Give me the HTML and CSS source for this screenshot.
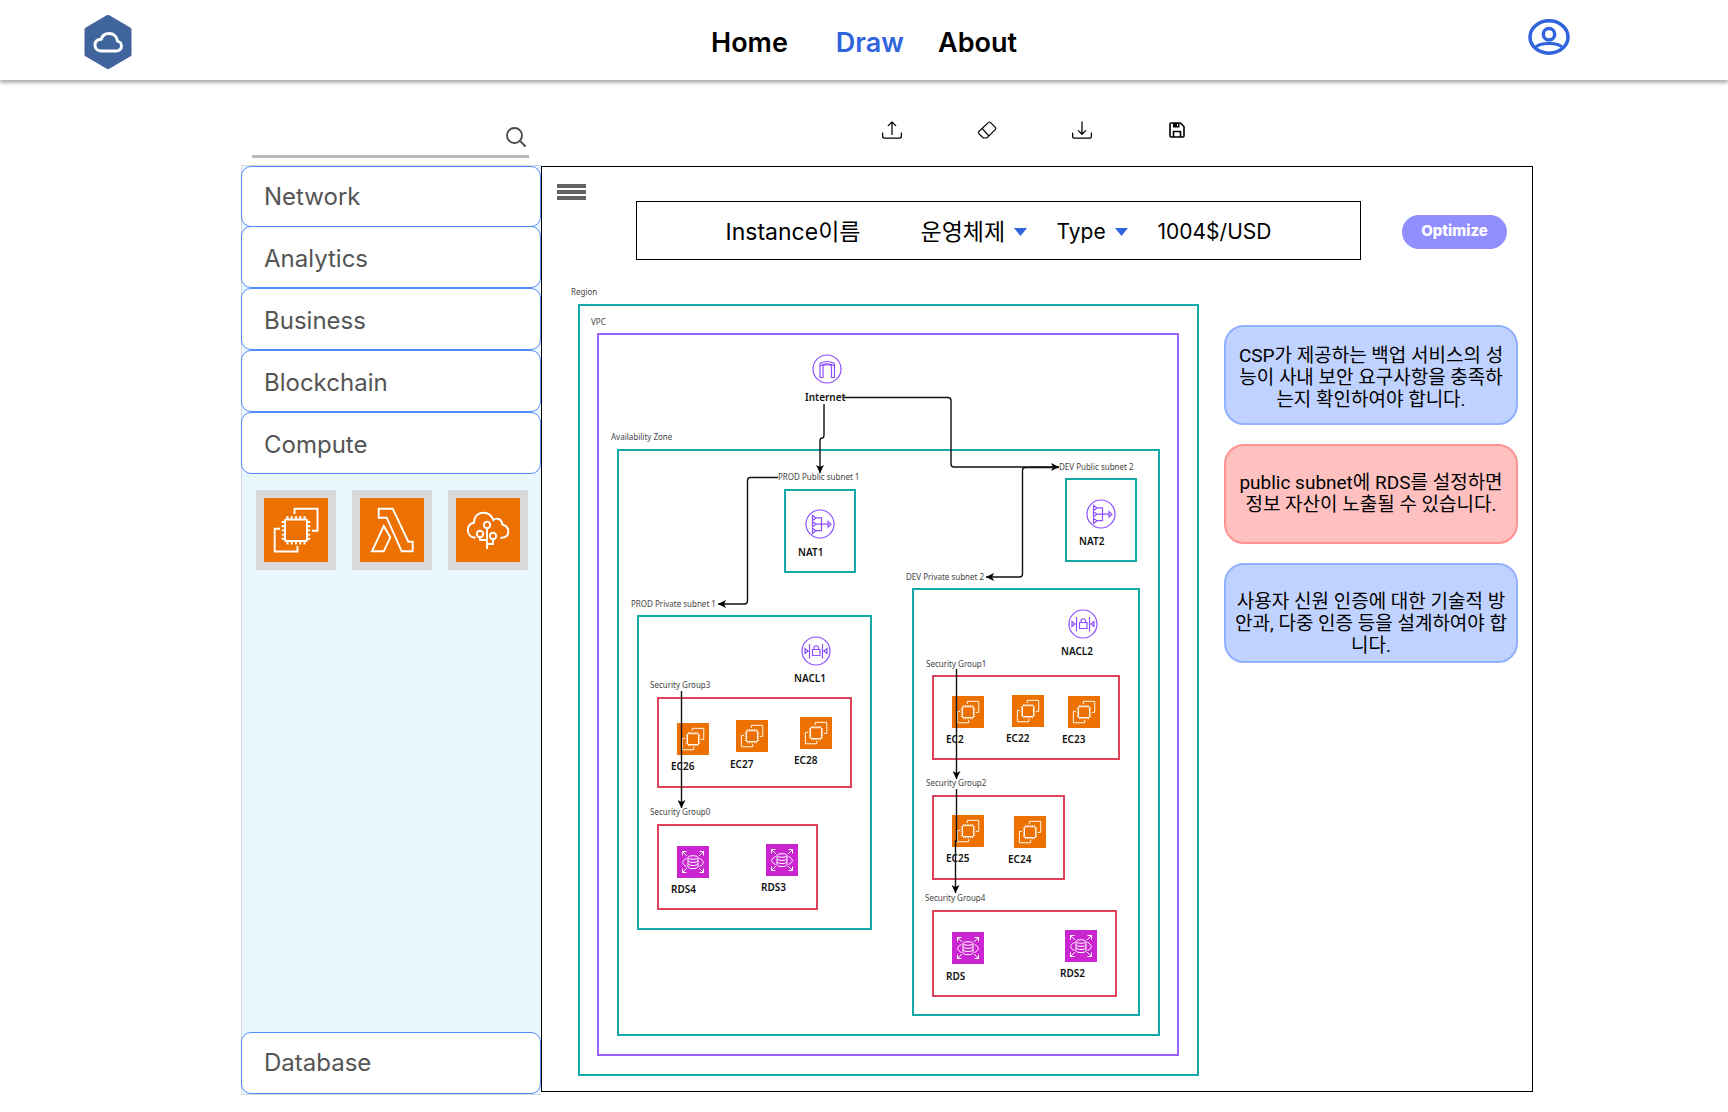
FILE: index.html
```html
<!DOCTYPE html>
<html lang="ko">
<head>
<meta charset="utf-8">
<meta name="viewport" content="width=device-width, initial-scale=1">
<title>Draw</title>
<link rel="stylesheet" href="styles.css">
</head>
<body>
<header class="header">
  <a class="logo" href="#" aria-label="Cloud home">
    <svg width="48" height="54" viewBox="0 0 48 54">
      <path d="M24 0 47 13.500V40.500L24 54 1 40.500V13.500Z" fill="#40659c" stroke="#40659c" stroke-linejoin="round"/>
      <path d="M17 36h15.500a5 5 0 0 0 1-9.900C33 21.500 29.500 18.500 25 18.500c-4 0-6.800 2.300-7.800 5.800C13 24.500 11 27 11 30c0 3.500 2.500 6 6 6Z" fill="none" stroke="#fff" stroke-width="3" stroke-linejoin="round"/>
    </svg>
  </a>
  <nav class="nav">
    <a class="nav-link nav-home" href="#">Home</a>
    <a class="nav-link nav-active" href="#" aria-current="page">Draw</a>
    <a class="nav-link" href="#">About</a>
  </nav>
  <a class="profile" href="#" aria-label="Profile">
    <svg width="42" height="36" viewBox="0 0 42 36" fill="none" stroke="#3064dd" stroke-width="3.500">
      <ellipse cx="21" cy="18" rx="19" ry="16.200"/>
      <ellipse cx="21" cy="15.300" rx="5.700" ry="5.700"/>
      <path d="M7 29C9 26 14 24.500 21 24.500S33 26 35 29" stroke-width="3"/>
    </svg>
  </a>
</header>

<main class="workspace">
  <form class="search" role="search">
    <input class="search-input" type="search" aria-label="Search services">
    <button class="icon-button" type="button" aria-label="Search">
      <svg width="20" height="20" viewBox="0 0 20 20" fill="none" stroke="#4a4a4a" stroke-width="1.900" stroke-linecap="round">
        <circle cx="8.500" cy="8.500" r="7.500"/><path d="M13.700 13.700 19 19"/>
      </svg>
    </button>
  </form>

  <div class="toolbar">
    <button class="icon-button" type="button" aria-label="Upload">
      <svg width="20" height="20" viewBox="0 0 16 16">
        <path d="M.5 9.900a.5.5 0 0 1 .5.500v2.500a1 1 0 0 0 1 1h12a1 1 0 0 0 1-1v-2.500a.5.5 0 0 1 1 0v2.500a2 2 0 0 1-2 2H2a2 2 0 0 1-2-2v-2.500a.5.5 0 0 1 .5-.5z"/>
        <path d="M7.646 1.146a.5.5 0 0 1 .708 0l3 3a.5.5 0 0 1-.708.708L8.500 2.707V11.500a.5.5 0 0 1-1 0V2.707L5.354 4.854a.5.5 0 1 1-.708-.708l3-3z"/>
      </svg>
    </button>
    <button class="icon-button" type="button" aria-label="Erase">
      <svg width="20" height="20" viewBox="0 0 20 20" fill="none" stroke="#000" stroke-width="1.200" stroke-linejoin="round">
        <path d="M11.500 2.400a1.300 1.300 0 0 1 1.900 0l5 5a1.300 1.300 0 0 1 0 1.900l-7.800 8a2.800 2.800 0 0 1-2 .7H7.400a2.800 2.800 0 0 1-1.900-.8L1.900 13.600a1.500 1.500 0 0 1 0-2.100ZM5.300 8.700l6.600 7.300"/>
      </svg>
    </button>
    <button class="icon-button" type="button" aria-label="Download">
      <svg width="20" height="20" viewBox="0 0 16 16">
        <path d="M.5 9.900a.5.5 0 0 1 .5.500v2.500a1 1 0 0 0 1 1h12a1 1 0 0 0 1-1v-2.500a.5.5 0 0 1 1 0v2.500a2 2 0 0 1-2 2H2a2 2 0 0 1-2-2v-2.500a.5.5 0 0 1 .5-.5z"/>
        <path d="M7.646 11.854a.5.5 0 0 0 .708 0l3-3a.5.5 0 0 0-.708-.708L8.500 10.293V1.500a.5.5 0 0 0-1 0v8.793L5.354 8.146a.5.5 0 1 0-.708.708l3 3z"/>
      </svg>
    </button>
    <button class="icon-button" type="button" aria-label="Save">
      <svg width="20" height="20" viewBox="0 0 20 20" fill="none" stroke="#000" stroke-width="1.600" stroke-linejoin="round">
        <path d="M4 3h9.500L17 6.500V16a1 1 0 0 1-1 1H4a1 1 0 0 1-1-1V4a1 1 0 0 1 1-1Z"/><path d="M6.500 17v-5.500h7V17"/><path d="M6 3v4.500h6.500V3Z" fill="#000" stroke="none"/><path d="M10.500 4v2" stroke="#fff" stroke-width="1"/>
      </svg>
    </button>
  </div>

  <aside class="sidebar">
    <button class="category" type="button">Network</button>
    <button class="category" type="button">Analytics</button>
    <button class="category" type="button">Business</button>
    <button class="category" type="button">Blockchain</button>
    <button class="category" type="button" aria-expanded="true">Compute</button>
    <div class="services">
      <button class="service" type="button" aria-label="EC2">
        <svg width="64" height="64" viewBox="0 0 64 64"><use href="#ec2"/></svg>
      </button>
      <button class="service" type="button" aria-label="Lambda">
        <svg width="64" height="64" viewBox="0 0 64 64">
          <path fill="#ed7100" d="M0 0h64v64H0z"/>
          <path d="M18.700 10.700h14l15.600 33h4.400v9.600h-11l-15-33.600h-8ZM23.700 28l6.600 11.300-6.600 14H12Z" fill="none" stroke="#fff" stroke-width="1.900"/>
        </svg>
      </button>
      <button class="service" type="button" aria-label="Elastic Beanstalk">
        <svg width="64" height="64" viewBox="0 0 64 64">
          <path fill="#ed7100" d="M0 0h64v64H0z"/>
          <g fill="none" stroke="#fff" stroke-width="1.900">
            <path d="M19.500 39.800C15 39.500 11.800 36.500 11.800 32c0-4 2.500-6.500 6.200-7.300C18 18.500 22 14.700 27.500 14.700c4.700 0 8.200 2.700 9.800 7.300 1.200-1 2.500-1.500 4-1.300 3 .3 4.700 2.600 5 5.800 3.800 1 6 3.500 6 7 0 3.800-3 6.300-7.800 6.500"/>
            <circle cx="31" cy="27" r="3.200"/><circle cx="24" cy="36" r="3.200"/><circle cx="37" cy="38" r="3.200"/>
            <path d="M31 30.200V51M24 39.200V42h7M37 41.200V46h-6"/>
          </g>
        </svg>
      </button>
    </div>
    <button class="category category-last" type="button">Database</button>
  </aside>

  <section class="canvas">
    <div class="canvas-top">
      <button class="menu-button" type="button" aria-label="Menu"><span></span><span></span><span></span></button>
      <div class="instance-bar">
        <span class="instance-name">Instance이름</span>
        <label class="picker picker-os">
          <select aria-label="운영체제"><option>운영체제</option></select>
          <svg width="13" height="8" viewBox="0 0 13 8"><path d="M0 0h13L6.500 8Z" fill="#3064dd"/></svg>
        </label>
        <label class="picker">
          <select aria-label="Type"><option>Type</option></select>
          <svg width="13" height="8" viewBox="0 0 13 8"><path d="M0 0h13L6.500 8Z" fill="#3064dd"/></svg>
        </label>
        <span>1004$/USD</span>
      </div>
      <button class="optimize" type="button">Optimize</button>
    </div>

    <div class="canvas-body">
      <svg class="diagram" viewBox="570 285 630 792" role="img" aria-label="Cloud architecture diagram">
        <defs>
          <marker id="arrow" markerUnits="userSpaceOnUse" markerWidth="8" markerHeight="8" refX="8" refY="4" orient="auto"><path d="M0 0 8 4 0 8 2 4Z"/></marker>
          <g id="ec2">
            <path fill="#ed7100" d="M0 0h64v64H0z"/>
            <g fill="none" stroke="#fff" stroke-width="1.900">
              <rect x="21" y="21.500" width="22" height="21.500" rx="1"/>
              <path d="M30.500 16v-5.300h23v22H48M16 30.700h-5.300v22.800h22.800V48"/>
              <path d="M23.500 18v3.500M27.700 18v3.500M32 18v3.500M36.300 18v3.500M40.500 18v3.500M23.500 43v3.500M27.700 43v3.500M32 43v3.500M36.300 43v3.500M40.500 43v3.500M17.700 24H21M17.700 28.200H21M17.700 32.400H21M17.700 36.600H21M17.700 40.800H21M43 24h3.300M43 28.200h3.300M43 32.400h3.300M43 36.600h3.300M43 40.800h3.300"/>
            </g>
          </g>
          <g id="node-ec2"><use href="#ec2" transform="scale(.5)"/></g>
          <g id="node-rds">
            <path fill="#c925d1" d="M0 0h32v32H0z"/>
            <g fill="none" stroke="#fff">
              <path d="M5.500 9.500v-4h4M5.500 5.500l4.500 4.500M22.500 5.500h4v4M26.500 5.500 22 10M5.500 22.500v4h4M5.500 26.500 10 22M22.500 26.500h4v-4M26.500 26.500 22 22"/>
              <ellipse cx="16" cy="11.500" rx="5" ry="1.800"/>
              <path d="M11 11.500v9.300c0 1 2.200 1.800 5 1.800s5-.8 5-1.800v-9.300M11 14.600c0 1 2.200 1.800 5 1.800s5-.8 5-1.800M11 17.700c0 1 2.200 1.800 5 1.800s5-.8 5-1.800M9.500 12.500C4.500 14.500 4.500 18.500 9.500 20.500M22.500 12.500c5 2 5 6 0 8"/>
            </g>
          </g>
          <g id="node-nat" fill="none" stroke="#8c4fff" stroke-width="1.200">
            <circle r="14"/>
            <path d="M-7.500-8.500v5l3.500-2.500ZM-7.500-2.300v5L-4 .2ZM-7.500 4.300v5L-4 6.700ZM8 -2.500v5.500L11 .2ZM-4-6.200h5.500V6.700H-4M-4 .2H8"/>
          </g>
          <g id="node-nacl" fill="none" stroke="#8c4fff" stroke-width="1.200">
            <circle r="14"/>
            <path d="M-6.500-7V7.500M6.500-7V7.500M-11-2.500v5L-8 0ZM11-2.500v5L8 0ZM-3.500-1.500h7.500v6h-7.500ZM-2-1.500v-1.500a2.200 2.200 0 0 1 4.500 0v1.500"/>
          </g>
          <g id="node-igw" fill="none" stroke="#8c4fff" stroke-width="1.200">
            <circle r="14"/>
            <path d="M-7 8.500V-5.500Q0-9.500 7.500-5.500V8.500H4.500V-3.500Q0-5-4-3.500V8.500ZM-7-3Q0-7.500 7.500-3"/>
          </g>
        </defs>

        <g fill="none" stroke-width="2">
          <g stroke="#12a9a9">
            <rect x="579" y="305" width="619" height="770"/>
            <rect x="618" y="450" width="541" height="585"/>
            <rect x="785" y="490" width="70" height="82"/>
            <rect x="1066" y="479" width="70" height="82"/>
            <rect x="638" y="616" width="233" height="313"/>
            <rect x="913" y="589" width="226" height="426"/>
          </g>
          <rect x="598" y="334" width="580" height="721" stroke="#9a63ff"/>
          <g stroke="#e04259">
            <rect x="658" y="698" width="193" height="89"/>
            <rect x="658" y="825" width="159" height="84"/>
            <rect x="933" y="676" width="186" height="83"/>
            <rect x="933" y="796" width="131" height="83"/>
            <rect x="933" y="911" width="183" height="85"/>
          </g>
        </g>

        <use href="#node-igw" x="827" y="369"/>
        <use href="#node-nat" x="820" y="524"/>
        <use href="#node-nat" x="1101" y="514"/>
        <use href="#node-nacl" x="816" y="651"/>
        <use href="#node-nacl" x="1083" y="624"/>
        <use href="#node-ec2" x="677" y="723"/>
        <use href="#node-ec2" x="736" y="720"/>
        <use href="#node-ec2" x="800" y="717"/>
        <use href="#node-ec2" x="952" y="696"/>
        <use href="#node-ec2" x="1012" y="695"/>
        <use href="#node-ec2" x="1068" y="696"/>
        <use href="#node-ec2" x="952" y="815"/>
        <use href="#node-ec2" x="1014" y="816"/>
        <use href="#node-rds" x="677" y="846"/>
        <use href="#node-rds" x="766" y="844"/>
        <use href="#node-rds" x="952" y="932"/>
        <use href="#node-rds" x="1065" y="930"/>

        <g class="group-label">
          <text x="571" y="295">Region</text>
          <text x="591" y="325">VPC</text>
          <text x="611" y="440">Availability Zone</text>
          <text x="778" y="480">PROD Public subnet 1</text>
          <text x="1059" y="470">DEV Public subnet 2</text>
          <text x="631" y="607">PROD Private subnet 1</text>
          <text x="906" y="580">DEV Private subnet 2</text>
          <text x="650" y="688">Security Group3</text>
          <text x="650" y="815">Security Group0</text>
          <text x="926" y="667">Security Group1</text>
          <text x="926" y="786">Security Group2</text>
          <text x="925" y="901">Security Group4</text>
        </g>
        <g class="node-label">
          <text x="805" y="401">Internet</text>
          <text x="798" y="556">NAT1</text>
          <text x="1079" y="545">NAT2</text>
          <text x="794" y="682">NACL1</text>
          <text x="1061" y="655">NACL2</text>
          <text x="671" y="770">EC26</text>
          <text x="730" y="768">EC27</text>
          <text x="794" y="764">EC28</text>
          <text x="671" y="893">RDS4</text>
          <text x="761" y="891">RDS3</text>
          <text x="946" y="743">EC2</text>
          <text x="1006" y="742">EC22</text>
          <text x="1062" y="743">EC23</text>
          <text x="946" y="862">EC25</text>
          <text x="1008" y="863">EC24</text>
          <text x="946" y="980">RDS</text>
          <text x="1060" y="977">RDS2</text>
        </g>

        <g fill="none" stroke="#111" stroke-width="1.400">
          <path marker-end="url(#arrow)" d="M843 397.500H948q3 0 3 3V464q0 3 3 3H1059"/>
          <path marker-end="url(#arrow)" d="M824 404V435q0 3-2 3t-2 3V473"/>
          <path marker-end="url(#arrow)" d="M778 477.500H750.500q-3 0-3 3V601q0 3-3 3H718"/>
          <path marker-end="url(#arrow)" d="M1059 467.500H1025.500q-3 0-3 3V574q0 3-3 3H986"/>
          <path marker-end="url(#arrow)" d="M681.500 691V808"/>
          <path marker-end="url(#arrow)" d="M956.500 669V779"/>
          <path marker-end="url(#arrow)" d="M956.500 789V841H955.500V893"/>
        </g>
      </svg>

      <div class="notes">
        <p class="note">CSP가 제공하는 백업 서비스의 성능이 사내 보안 요구사항을 충족하는지 확인하여야 합니다.</p>
        <p class="note note-warning">public subnet에 RDS를 설정하면 정보 자산이 노출될 수 있습니다.</p>
        <p class="note note-low">사용자 신원 인증에 대한 기술적 방안과, 다중 인증 등을 설계하여야 합니다.</p>
      </div>
    </div>
  </section>
</main>
</body>
</html>
```
FILE: styles.css
```css
*,
*::before,
*::after {
  box-sizing: border-box;
}

body {
  margin: 0;
  background: #fff;
  color: #000;
  font-family: Inter, "Noto Sans CJK KR", sans-serif;
}

button,
input,
select {
  margin: 0;
  padding: 0;
  border: 0;
  background: none;
  color: inherit;
  font: inherit;
  appearance: none;
}

svg {
  display: block;
}

/* Header */
.header {
  display: grid;
  grid-template-columns: 1fr auto 1fr;
  align-items: center;
  height: 80px;
  background: #fff;
  box-shadow: 0 3px 3px rgba(0, 0, 0, 0.3);
}

.logo {
  justify-self: start;
  margin: 4px 0 0 84px;
}

.nav {
  display: flex;
  gap: 34px;
  padding-top: 6px;
}

.nav-link {
  color: #000;
  font-size: 27px;
  font-weight: 600;
  line-height: 32px;
  text-decoration: none;
}

.nav-home {
  margin-right: 14px;
}

.nav-active {
  color: #3064dd;
}

.profile {
  justify-self: end;
  margin: 0 158px 6px 0;
}

/* Workspace */
.workspace {
  display: grid;
  grid-template-columns: 300px 1fr;
  grid-template-rows: 85px auto;
  padding: 0 195px 17px 241px;
}

.search {
  display: flex;
  align-items: center;
  align-self: end;
  height: 40px;
  margin: 0 12px 7px 11px;
  padding: 0 3px 0 0;
  border-bottom: 3px solid #b8b8b8;
}

.search-input {
  flex: 1;
  min-width: 0;
  color: #555;
  font-size: 18px;
  outline: none;
}

.toolbar {
  display: flex;
  align-items: center;
  justify-content: center;
  gap: 75px;
  padding: 14px 5px 0 0;
}

/* Sidebar */
.sidebar {
  display: flex;
  flex-direction: column;
  border: solid #cfd8de;
  border-width: 1px 0 1px 1px;
  background: #eaf7ff;
}

.category {
  height: 62px;
  margin-left: -1px;
  padding: 3px 22px 0;
  border: 1px solid #5089fb;
  border-radius: 10px;
  background: #fff;
  color: #555;
  font-size: 24px;
  line-height: 30px;
  text-align: left;
}

.category:first-child {
  height: 61px;
  margin-bottom: -1px;
  padding-top: 0;
}

.category-last {
  margin-top: auto;
  padding-top: 0;
}

.services {
  display: flex;
  gap: 16px;
  padding: 16px 14px;
}

.service {
  padding: 8px;
  background: #d9d9d9;
}

/* Canvas */
.canvas {
  margin: 1px 0 3px;
  padding: 17px 14px 14px 15px;
  border: 1px solid #000;
}

.canvas-top {
  display: flex;
  align-items: flex-start;
  margin-right: 11px;
}

.menu-button {
  display: grid;
  gap: 2px;
  width: 29px;
}

.menu-button span {
  height: 4px;
  background: #636363;
}

.instance-bar {
  display: flex;
  flex: 1;
  align-items: center;
  justify-content: center;
  gap: 30px;
  height: 59px;
  margin: 17px 41px 0 50px;
  padding-top: 2px;
  border: 1px solid #000;
  font-size: 21px;
  line-height: 32px;
}

.instance-name {
  margin-right: 30px;
  font-size: 23px;
}

.picker {
  display: flex;
  align-items: center;
  gap: 8px;
}

.picker-os {
  font-size: 23px;
}

.optimize {
  width: 105px;
  height: 34px;
  margin-top: 31px;
  padding-bottom: 3px;
  border-radius: 17px;
  background: #918eff;
  color: #fff;
  font-size: 15px;
  font-weight: 800;
}

.canvas-body {
  display: flex;
  align-items: flex-start;
  gap: 24px;
  margin: 25px 0 0 13px;
}

.diagram {
  flex: none;
  width: 630px;
}

.group-label,
.node-label {
  font-family: "Noto Sans", "Open Sans", sans-serif;
}

.group-label {
  fill: #444;
  font-size: 8px;
}

.node-label {
  fill: #111;
  font-size: 10px;
  font-weight: 600;
}

/* Notes */
.notes {
  display: grid;
  flex: 1;
  gap: 19px;
  margin-top: 40px;
}

.note {
  display: flex;
  align-items: center;
  justify-content: center;
  min-height: 100px;
  margin: 0;
  padding: 6px 8px 0;
  border: 2px solid #91b0ff;
  border-radius: 20px;
  background: #c0d2ff;
  font-family: Roboto, "Noto Sans CJK KR", sans-serif;
  font-size: 19px;
  line-height: 22px;
  text-align: center;
}

.note-warning {
  padding-top: 0;
  border-color: #ff9191;
  background: #ffc0c0;
}

.note-low {
  padding-top: 22px;
}
```
